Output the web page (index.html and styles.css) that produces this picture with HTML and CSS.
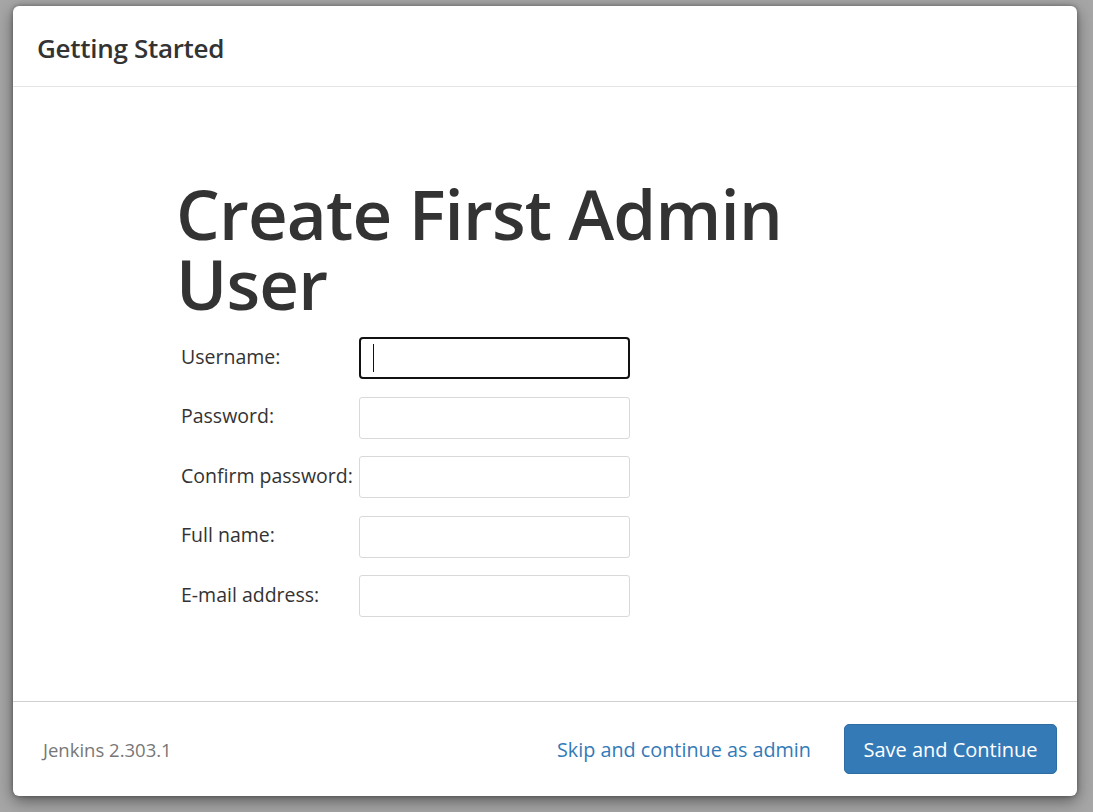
FILE: index.html
```html
<!DOCTYPE html>
<html lang="en">
<head>
<meta charset="utf-8">
<title>Getting Started</title>
<link rel="stylesheet" href="styles.css">
</head>
<body>
<div class="backdrop">
  <div class="modal">
    <div class="modal-header">
      <h4 class="modal-title">Getting Started</h4>
    </div>
    <div class="modal-body">
      <div class="content">
        <h1 class="title">Create First Admin User</h1>
        <form class="form">
          <label class="label" for="username">Username:</label>
          <div class="field focused">
            <input class="input" id="username" type="text">
            <span class="caret"></span>
          </div>
          <label class="label" for="password1">Password:</label>
          <div class="field"><input class="input" id="password1" type="password"></div>
          <label class="label" for="password2">Confirm password:</label>
          <div class="field"><input class="input" id="password2" type="password"></div>
          <label class="label" for="fullname">Full name:</label>
          <div class="field"><input class="input" id="fullname" type="text"></div>
          <label class="label" for="email">E-mail address:</label>
          <div class="field"><input class="input" id="email" type="text"></div>
        </form>
      </div>
    </div>
    <div class="modal-footer">
      <div class="version">Jenkins 2.303.1</div>
      <div class="actions">
        <a class="skip" href="#">Skip and continue as admin</a>
        <button class="btn-primary" type="button">Save and Continue</button>
      </div>
    </div>
  </div>
</div>
</body>
</html>
```
FILE: styles.css
```css
html, body {
  margin: 0;
  padding: 0;
  height: 100%;
}

body {
  background: #a6a6a6;
  font-family: "Open Sans", "Noto Sans", "Liberation Sans", sans-serif;
  color: #333333;
}

.backdrop {
  box-sizing: border-box;
  height: 812px;
  padding: 6px 16px 16px 13px;
  display: flex;
}

.modal {
  flex: 1;
  display: flex;
  flex-direction: column;
  background: #ffffff;
  border-radius: 6px;
  box-shadow: 0 0 4px rgba(0, 0, 0, 0.35), 0 5px 16px rgba(0, 0, 0, 0.45);
  overflow: hidden;
}

.modal-header {
  height: 81px;
  border-bottom: 1px solid #e5e5e5;
  display: flex;
  align-items: center;
  padding: 4px 24px 0;
  box-sizing: border-box;
  flex: none;
}

.modal-title {
  margin: 0;
  font-size: 26px;
  font-weight: 550;
  color: #333333;
  letter-spacing: -0.3px;
}

.modal-body {
  flex: 1;
}

.content {
  padding: 91px 0 0 163px;
}

.title {
  margin: 0;
  width: 680px;
  font-size: 69px;
  line-height: 70px;
  font-weight: 600;
  color: #333333;
  letter-spacing: -0.8px;
}

.form {
  margin: 19px 0 0 5px;
  display: grid;
  grid-template-columns: 178px 271px;
  row-gap: 17.5px;
  align-items: center;
}

.label {
  font-size: 19.5px;
  color: #333333;
  white-space: nowrap;
  margin-top: -4px;
}

.field {
  position: relative;
  height: 42px;
}

.input {
  box-sizing: border-box;
  width: 271px;
  height: 42px;
  margin: 0;
  border: 1px solid #d9d9d9;
  border-radius: 3px;
  background: #ffffff;
  font: inherit;
  outline: none;
}

.focused .input {
  border: 2px solid #111111;
  border-radius: 4px;
}

.caret {
  position: absolute;
  left: 14px;
  top: 7px;
  width: 1px;
  height: 28px;
  background: #111111;
}

.modal-footer {
  flex: none;
  height: 94px;
  border-top: 1px solid #cfcfcf;
  display: flex;
  align-items: center;
  justify-content: space-between;
  padding: 0 20px 0 30px;
  box-sizing: content-box;
}

.version {
  font-size: 18.5px;
  color: #777777;
}

.actions {
  display: flex;
  align-items: center;
  gap: 33px;
}

.skip {
  font-size: 19.8px;
  color: #337ab7;
  text-decoration: none;
}

.btn-primary {
  box-sizing: border-box;
  height: 50px;
  width: 213px;
  padding: 0 10px;
  border: 1px solid #2e6da4;
  border-radius: 5px;
  background: #337ab7;
  color: #ffffff;
  font-family: inherit;
  font-size: 20px;
}
```
